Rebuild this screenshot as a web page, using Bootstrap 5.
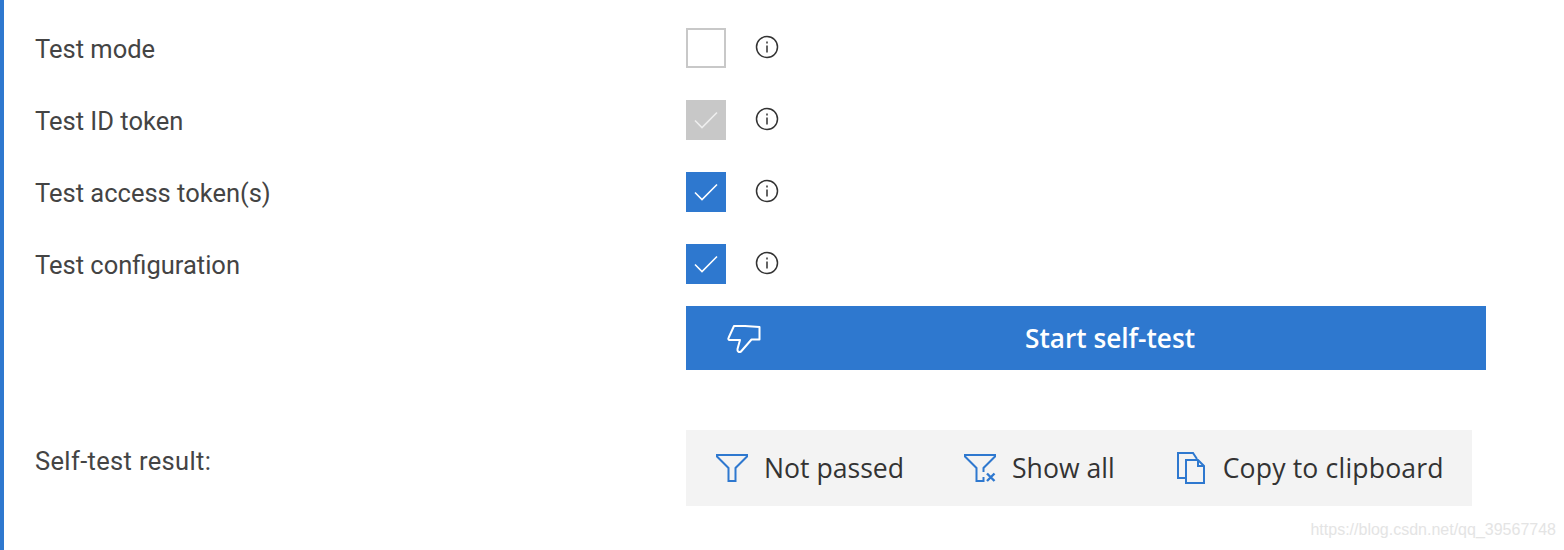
<!DOCTYPE html>
<html lang="en">
<head>
    <meta charset="UTF-8">
    <meta name="viewport" content="width=device-width, initial-scale=1.0">
    <title>Self-test</title>
    <link href="https://cdn.jsdelivr.net/npm/bootstrap@5.3.3/dist/css/bootstrap.min.css" rel="stylesheet">
    <style>
        html, body { height: 100%; }
        body { background: #fff; overflow: hidden; }
        .page-wrap { height: 550px; border-left: 4px solid #2e78cf; padding: 28px 0 0 31px; position: relative; }
        .label-col { width: 651px; flex: none; font-family: "Roboto", "Liberation Sans", sans-serif; font-size: 25.5px; color: #444; line-height: 40px; }
        .opt-row { height: 40px; margin-bottom: 32px; }
        .opt-row .label-col { padding-top: 1px; }
        .tick-box { width: 40px; height: 40px; flex: none; border: 2px solid #c8c8c8; background: #fff; margin-right: 29px; }
        .tick-box.is-off { background: #c8c8c8; border-color: #c8c8c8; }
        .tick-box.is-on { background: #2e78cf; border-color: #2e78cf; }
        .info-ico { margin-top: 7px; display: block; }
        .start-btn { margin-left: 651px; margin-top: -10px; width: 800px; height: 64px; background: #2e78cf; color: #fff; font-family: "Open Sans", sans-serif; font-weight: 600; font-size: 26.2px; position: relative; padding: 2px 0 0 48px; }
        .start-btn svg { position: absolute; left: 41px; top: 18px; }
        .result-row { margin-top: 60px; }
        .result-row .label-col { padding-top: 11px; letter-spacing: .35px; }
        .tool-bar { width: 786px; height: 76px; background: #f3f3f3; padding: 2px 0 0 30px; font-family: "Open Sans", sans-serif; font-size: 26.6px; color: #333; gap: 60px; }
        .tool-item { white-space: nowrap; }
        .tool-item svg { margin: -2px 16px 0 0; }
        .tool-item.copy-item { letter-spacing: .17px; margin-left: 2px; }
        .wm { position: absolute; right: 8px; bottom: 8px; font-family: "Liberation Sans", sans-serif; font-size: 16px; color: #e4e4e4; }
    </style>
</head>
<body>
    <div class="page-wrap">
        <div class="d-flex opt-row">
            <div class="label-col">Test mode</div>
            <div class="tick-box"></div>
            <svg class="info-ico" width="24" height="24" viewBox="0 0 24 24" fill="none" stroke="#333" stroke-width="1.5"><circle cx="12" cy="12" r="10.5"/><path d="M12 10.5V17.5M12 6.5V8.5"/></svg>
        </div>
        <div class="d-flex opt-row">
            <div class="label-col">Test ID token</div>
            <div class="tick-box is-off d-flex align-items-center justify-content-center">
                <svg width="24" height="18" viewBox="0 0 24 18" fill="none" stroke="#eee" stroke-width="1.6"><path d="M1 9.5L8 16.5L23 1.5"/></svg>
            </div>
            <svg class="info-ico" width="24" height="24" viewBox="0 0 24 24" fill="none" stroke="#333" stroke-width="1.5"><circle cx="12" cy="12" r="10.5"/><path d="M12 10.5V17.5M12 6.5V8.5"/></svg>
        </div>
        <div class="d-flex opt-row">
            <div class="label-col">Test access token(s)</div>
            <div class="tick-box is-on d-flex align-items-center justify-content-center">
                <svg width="24" height="18" viewBox="0 0 24 18" fill="none" stroke="#fff" stroke-width="1.6"><path d="M1 9.5L8 16.5L23 1.5"/></svg>
            </div>
            <svg class="info-ico" width="24" height="24" viewBox="0 0 24 24" fill="none" stroke="#333" stroke-width="1.5"><circle cx="12" cy="12" r="10.5"/><path d="M12 10.5V17.5M12 6.5V8.5"/></svg>
        </div>
        <div class="d-flex opt-row">
            <div class="label-col">Test configuration</div>
            <div class="tick-box is-on d-flex align-items-center justify-content-center">
                <svg width="24" height="18" viewBox="0 0 24 18" fill="none" stroke="#fff" stroke-width="1.6"><path d="M1 9.5L8 16.5L23 1.5"/></svg>
            </div>
            <svg class="info-ico" width="24" height="24" viewBox="0 0 24 24" fill="none" stroke="#333" stroke-width="1.5"><circle cx="12" cy="12" r="10.5"/><path d="M12 10.5V17.5M12 6.5V8.5"/></svg>
        </div>

        <div class="start-btn d-flex align-items-center justify-content-center">
            <svg width="34" height="30" viewBox="0 0 34 30" fill="none" stroke="#fff" stroke-width="2" stroke-linejoin="round"><path d="M7 2H18L32.500 3V15.500H24.500L14 27.500C12 28.500 10 27.500 10.500 25L13 16H2.500C1.500 16 1 15 1.500 14Z"/></svg>
            Start self-test
        </div>

        <div class="d-flex result-row">
            <div class="label-col">Self-test result:</div>
            <div class="tool-bar d-flex align-items-center">
                <div class="tool-item d-flex align-items-center">
                    <svg width="32" height="30" viewBox="0 0 32 30" fill="none" stroke="#2e78cf" stroke-width="2"><path d="M1 2H31V3.500L19.500 15V28H12.500V15L1 3.500Z"/></svg>
                    Not passed
                </div>
                <div class="tool-item d-flex align-items-center">
                    <svg width="32" height="30" viewBox="0 0 32 30" fill="none" stroke="#2e78cf" stroke-width="2"><path d="M19.500 19V15L31 3.500V2H1V3.500L12.500 15V28H19.500V24"/><path stroke-width="2.4" d="M23 20.500L30.500 28M30.500 20.500L23 28"/></svg>
                    Show all
                </div>
                <div class="tool-item copy-item d-flex align-items-center">
                    <svg width="30" height="34" viewBox="0 0 30 34" fill="none" stroke="#2e78cf" stroke-width="2"><path d="M9 27H1V2H16L20 8M9 9H21L27 15V32H9ZM21 9V15H27"/></svg>
                    Copy to clipboard
                </div>
            </div>
        </div>
        <div class="wm">https://blog.csdn.net/qq_39567748</div>
    </div>
    <script src="https://cdn.jsdelivr.net/npm/bootstrap@5.3.3/dist/js/bootstrap.bundle.min.js"></script>
</body>
</html>
